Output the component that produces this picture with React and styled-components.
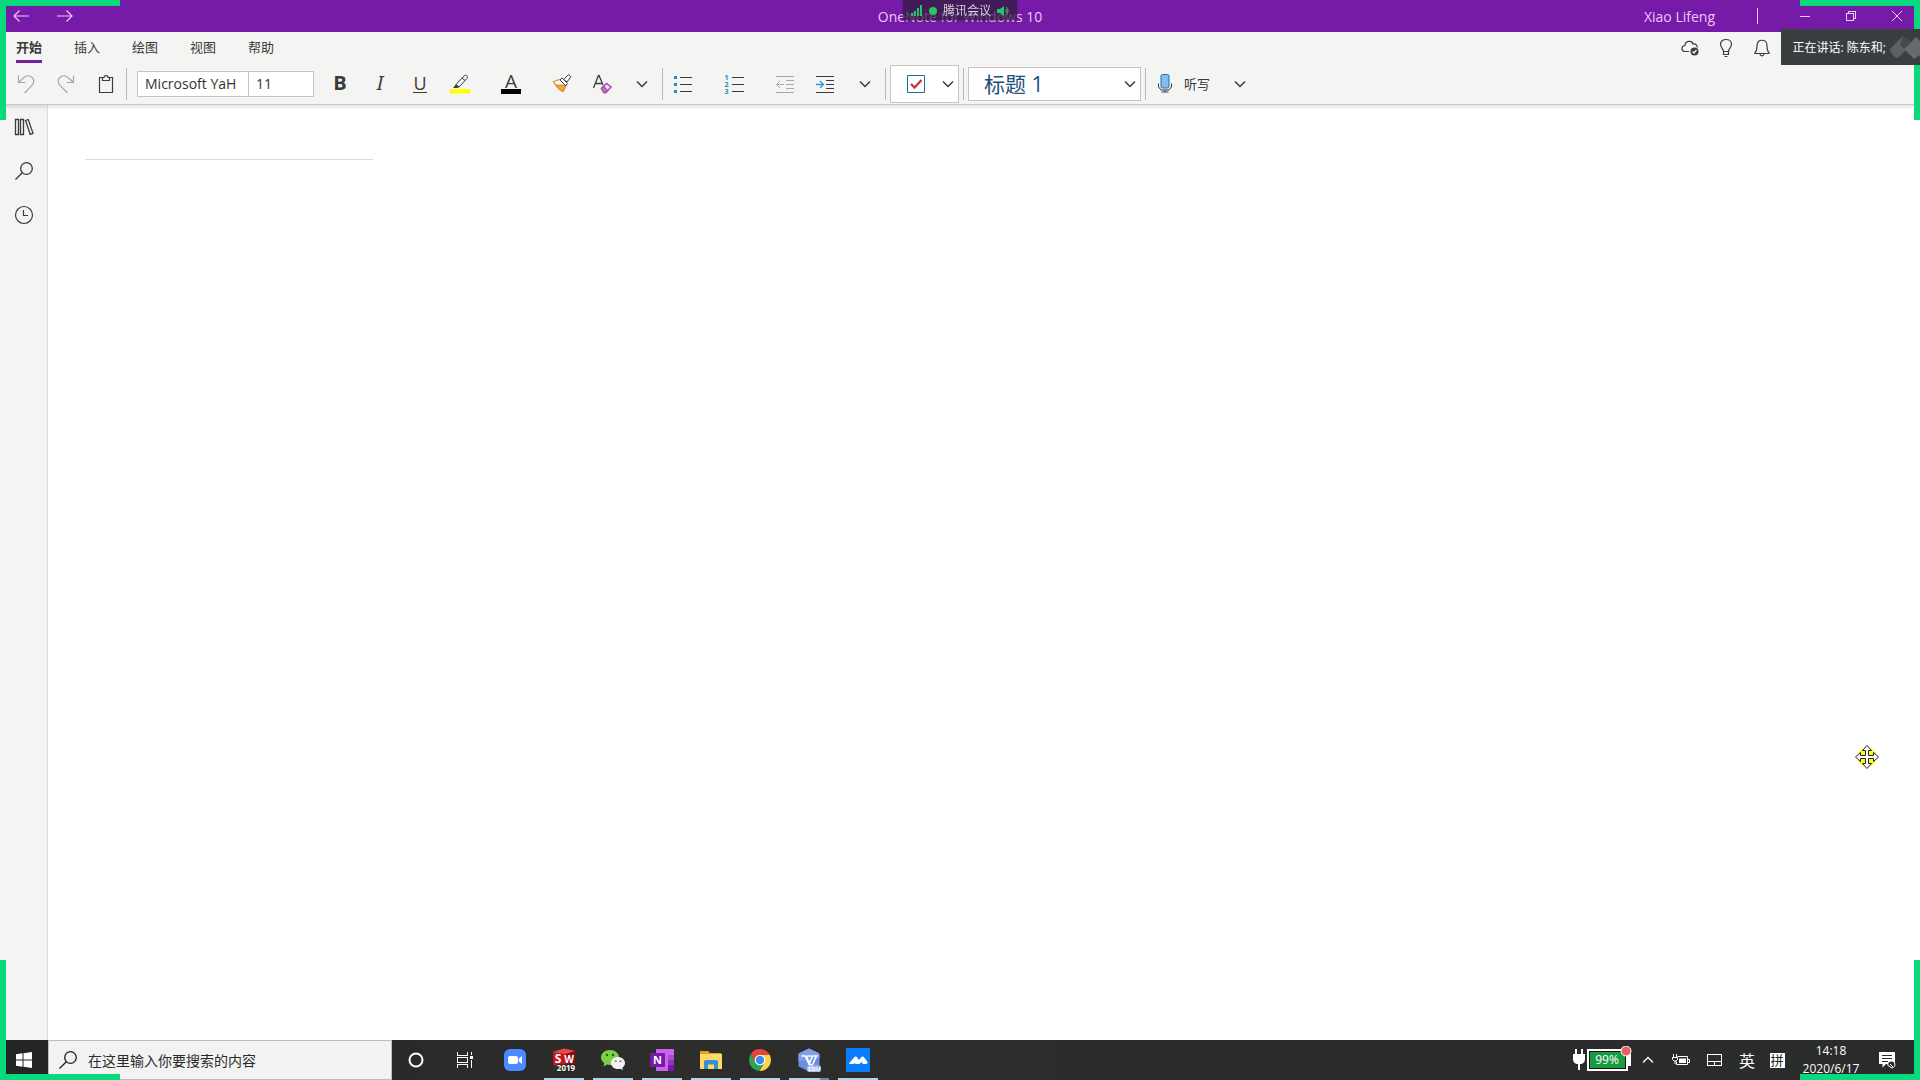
import React from "react";
import styled, { createGlobalStyle } from "styled-components";

const Svg = ({ size = 20, children, ...rest }) => (
  <svg
    width={size}
    height={size}
    viewBox={`0 0 ${size} ${size}`}
    fill="none"
    stroke="currentColor"
    aria-hidden="true"
    {...rest}
  >
    {children}
  </svg>
);

const Chevron = () => (
  <Svg size={12} strokeWidth="1.5">
    <path d="M1 3.5l5 5 5-5" />
  </Svg>
);

const BackIcon = () => (
  <Svg size={18} strokeWidth="1.2">
    <path d="M17 9H2M7.500 3.500L2 9l5.500 5.500" />
  </Svg>
);

const ForwardIcon = () => (
  <Svg size={18} strokeWidth="1.2">
    <path d="M1 9h15M10.500 3.500L16 9l-5.500 5.500" />
  </Svg>
);

const UndoIcon = () => (
  <Svg strokeWidth="1.2">
    <path d="M2.500 1.500v7h7M2.500 8.500l5-4.500c2.500-2.500 6-3 8.500-.7 2.500 2.300 2.200 5.700 0 8L8.500 19" />
  </Svg>
);

const RedoIcon = () => (
  <Svg strokeWidth="1.2">
    <path d="M17.500 1.500v7h-7M17.500 8.500l-5-4.500C10 1.500 6.500 1 4 3.300c-2.500 2.300-2.200 5.700 0 8l7.500 7.700" />
  </Svg>
);

const ClipboardIcon = () => (
  <Svg strokeWidth="1.2">
    <path d="M6 3.500H3.500v15h13v-15H14" />
    <path d="M6.500 6.500v-3H8c0-2.500 4-2.500 4 0h1.500v3z" />
  </Svg>
);

const HighlighterIcon = () => (
  <Svg>
    <path d="M0 15h20v4.500H0z" fill="#ff0" stroke="none" />
    <path d="M6 10.500L14 2c1-1 2-1 2.800-.2.900.9.900 2 0 2.800L9 13H6zM6 10.500L9 13M12 4l3 2.500" />
    <path d="M3 14l3-3.500L8.500 13 7 14z" fill="currentColor" stroke="none" />
  </Svg>
);

const BrushIcon = () => (
  <Svg>
    <path d="M1.500 7.500l8-2.500 5 6-3.500 6.500C7 16 4 12 1.500 7.500z" fill="#fff" stroke="#e08a2c" strokeWidth="1.3" />
    <path d="M4 11h10l-3 6.500C8 16 6 14 4 11z" fill="#f3a53f" stroke="#e08a2c" />
    <path d="M8 6l2-2 5.500 5.500-2 2z" fill="#fff" />
    <path d="M11.500 5.500l1.500-1 .8-1.500 3-2.300 2 2L16.500 6 15 8z" fill="#fff" />
  </Svg>
);

const EraserIcon = () => (
  <Svg strokeWidth="1.3">
    <path d="M1.500 14L6.500 1.500h.5L11 11M3.300 9.500h7" />
    <path d="M9.500 14.500l5-5 4.500 3.500-5 5.500h-2z" fill="#f6e5f8" stroke="#a44cad" strokeWidth="1.5" />
    <path d="M9.500 14.500l2-2 4 4-1.500 2h-2z" fill="#c27bca" stroke="#a44cad" />
  </Svg>
);

const BulletsIcon = () => (
  <Svg shapeRendering="crispEdges">
    <path d="M1 2h3v3H1zM1 9h3v3H1zM1 16h3v3H1z" fill="#2b88c3" stroke="none" />
    <path d="M7 3.500h12M7 10.500h12M7 17.500h12" />
  </Svg>
);

const OutdentIcon = () => (
  <Svg shapeRendering="crispEdges">
    <path d="M1 2.500h18M11 6.500h8M11 10.500h8M11 14.500h8M1 18.500h18" />
    <path d="M9 10.500H2M5 7l-3.500 3.500L5 14" shapeRendering="auto" />
  </Svg>
);

const IndentIcon = () => (
  <Svg shapeRendering="crispEdges">
    <path d="M1 2.500h18M11 6.500h8M11 10.500h8M11 14.500h8M1 18.500h18" />
    <path d="M1 10.500h7M5 7l3.500 3.500L5 14" stroke="#2b97d6" strokeWidth="1.300" shapeRendering="auto" />
  </Svg>
);

const TagIcon = () => (
  <Svg>
    <path d="M1.500 1.500h17v17h-17z" stroke="#1f6f93" />
    <path d="M5 10l3.500 3.500L15.500 6" stroke="#c0373a" strokeWidth="2.300" />
  </Svg>
);

const MicIcon = () => (
  <Svg>
    <rect x="6" y="1.500" width="8" height="13.500" rx="1.500" fill="#83beec" stroke="#1e6fae" />
    <path d="M3.500 10.500v3.500l2.500 3h8l2.500-3v-3.500M10 17v2M6.500 19h7" />
  </Svg>
);

const CloudIcon = () => (
  <Svg strokeWidth="1.200">
    <path d="M9 13.500H5C.8 13 1 8 5 7.500 5 2.500 12 2 13 6c3-.5 4.500 1.500 4 3.500" />
    <circle cx="14.500" cy="13.500" r="4" fill="currentColor" stroke="none" />
    <path d="M12.500 13.500l1.500 1.500 2.500-3" stroke="#fff" />
  </Svg>
);

const BulbIcon = () => (
  <Svg strokeWidth="1.200">
    <path d="M7.500 13.500c0-3-3-3.500-3-7.500C4.500 3.200 7 1.500 10 1.500s5.500 1.700 5.500 4.500c0 4-3 4.500-3 7.500zM7.500 13.500v3h5v-3M8.500 18.500h3" />
  </Svg>
);

const BellIcon = () => (
  <Svg strokeWidth="1.200">
    <path d="M3 14.500c2-1.500 2-3 2-7 0-7 10-7 10 0 0 4 0 5.500 2 7v1H3zM8 16c.3 2.500 3.700 2.500 4 0" />
  </Svg>
);

const BooksIcon = () => (
  <Svg strokeWidth="1.300">
    <path d="M1.500 2.500h3v15h-3zM6.500 2.500h3v15h-3zM11.500 3.500l2.700-1L19 16.300l-2.800 1z" />
  </Svg>
);

const SearchIcon = () => (
  <Svg strokeWidth="1.300">
    <circle cx="12.500" cy="7.500" r="5.800" />
    <path d="M8.300 11.700L1.500 18.500" />
  </Svg>
);

const ClockIcon = () => (
  <Svg strokeWidth="1.200">
    <circle cx="10" cy="10" r="8.500" />
    <path d="M9.500 5v5.500H14" />
  </Svg>
);

const MinimizeIcon = () => (
  <Svg size={12} shapeRendering="crispEdges">
    <path d="M1 6.500h10" />
  </Svg>
);

const RestoreIcon = () => (
  <Svg size={12} shapeRendering="crispEdges">
    <path d="M1.500 3.500h7v7h-7zM3.500 3V1.500h7v7H9" />
  </Svg>
);

const CloseIcon = () => (
  <Svg size={12}>
    <path d="M1 1l10 10M11 1L1 11" />
  </Svg>
);

const WindowsIcon = () => (
  <Svg size={16} fill="#fff" stroke="none">
    <path d="M0 2.200L6.500 1.300v6.200H0zM7.500 1.200L16 0v7.500H7.500zM0 8.500h6.500v6.200L0 13.800zM7.500 8.500H16V16l-8.500-1.200z" />
  </Svg>
);

const TaskViewIcon = () => (
  <Svg shapeRendering="crispEdges">
    <path d="M3.500 2v3.500h10V2M3.500 18v-3.500h10V18M3.500 7.500h10v5h-10zM17.500 2v3M17.500 10v8" />
    <path d="M16 6h3v3h-3z" fill="#fff" stroke="none" />
  </Svg>
);

const ZoomIcon = () => (
  <Svg size={24} stroke="none">
    <rect x="1" y="1" width="22" height="22" rx="6" fill="#4a8cff" />
    <rect x="5" y="8" width="10" height="8" rx="2" fill="#fff" />
    <path d="M15.700 10.800L19 8v8l-3.300-2.800z" fill="#fff" />
  </Svg>
);

const SolidWorksIcon = () => (
  <Svg size={24} stroke="none" fontFamily="Open Sans" fontWeight="700" textAnchor="middle">
    <path d="M1 4l11-3.500L23 3v15l-10 3L1 17z" fill="#c5161d" />
    <path d="M1 4l11-3.500L23 3l-9 3z" fill="#e8494c" />
    <path d="M13.500 6L23 3v15l-9.500 3z" fill="#8f0d13" />
    <text x="6" y="15" fontSize="12" fill="#fff">S</text>
    <text x="17" y="15" fontSize="10" fill="#fff">W</text>
    <text x="14" y="23" fontSize="8" fill="#fff" stroke="#222" strokeWidth="2" paintOrder="stroke">2019</text>
  </Svg>
);

const WeChatIcon = () => (
  <Svg size={26} stroke="none">
    <path d="M10 3c5 0 9 3.300 9 7.500S15 18 10 18c-1 0-2-.2-3-.5L3.500 19.500l.8-3.300C2.500 14.800 1 13 1 10.500 1 6.300 5 3 10 3z" fill="#7bd143" />
    <path d="M18 10c4 0 7 2.700 7 6 0 2-1 3.600-2.700 4.700l.5 2.300-2.600-1.300c-.7.200-1.400.3-2.200.3-4 0-7-2.700-7-6s3-6 7-6z" fill="#f2f2f2" />
    <circle cx="7" cy="8" r="1.200" fill="#2d5a18" />
    <circle cx="13" cy="8" r="1.200" fill="#2d5a18" />
    <circle cx="15.800" cy="14.200" r="1" fill="#777" />
    <circle cx="20.400" cy="14.200" r="1" fill="#777" />
  </Svg>
);

const OneNoteIcon = () => (
  <Svg size={24} stroke="none" fontFamily="Open Sans" fontWeight="700">
    <rect x="6" y="1" width="18" height="22" rx="1" fill="#ca64ea" />
    <path d="M18 7h6v5h-6z" fill="#ae4bd5" />
    <path d="M18 12h6v5h-6z" fill="#9332bf" />
    <path d="M18 17h6v6h-6z" fill="#7719aa" />
    <rect y="5" width="15" height="14" rx="1" fill="#7719aa" />
    <text x="3" y="16" fontSize="11" fill="#fff">N</text>
  </Svg>
);

const ExplorerIcon = () => (
  <Svg size={24} stroke="none">
    <path d="M1 3h8l2 2h11v3H1z" fill="#e0a31c" />
    <path d="M1 6h22v15H1z" fill="#ffd968" />
    <path d="M5 21v-8l2-1h10l2 1v8h-4v-4.500H9V21z" fill="#3b8fd0" />
  </Svg>
);

const ChromeIcon = () => (
  <Svg size={24} stroke="none">
    <path d="M2.500 6.500A11 11 0 0 1 21.800 7H12l-4.300 7.500z" fill="#e0473b" />
    <path d="M21.800 7A11 11 0 0 1 11.500 23l4.800-8.500L12 7z" fill="#fdd349" />
    <path d="M11.500 23A11 11 0 0 1 2.500 6.500l5.200 8h8.600z" fill="#2aa556" />
    <circle cx="12" cy="12" r="5.300" fill="#fff" />
    <circle cx="12" cy="12" r="4.200" fill="#4285f4" />
  </Svg>
);

const WpsIcon = () => (
  <Svg size={24} fontFamily="Open Sans" fontWeight="700">
    <path d="M11 1q1-.8 2 0l8.500 4q1 .5 1 1.500v11q0 1-1 1.500L13 23q-1 .8-2 0l-8.500-4q-1-.5-1-1.500v-11q0-1 1-1.500z" fill="#6c8de0" stroke="none" />
    <path d="M11 1q1-.8 2 0l8.500 4q1 .5 1 1.500V10l-21 3V6.500q0-1 1-1.500z" fill="#829fe8" stroke="none" />
    <path d="M4.500 8h3.800l3.700 8 3.700-8h3.800l-4.200 9h-2.100L9.500 8.500M10 8h4.500" stroke="#fff" strokeWidth="1.600" />
    <rect x="10" y="17.500" width="14" height="6.500" rx="2" fill="#a9baf0" stroke="none" />
    <text x="11" y="23" fontSize="6" fill="#fff" stroke="none">EDU</text>
  </Svg>
);

const MeetingIcon = () => (
  <Svg size={24} stroke="none">
    <rect width="24" height="24" fill="#0a7cff" />
    <path d="M3 15.500l5-6c1-1.200 2.300-1.200 3.200 0L13 12l2-2.500c1-1.200 2.200-1.200 3.200 0l3 4c.8 1.200 0 2.500-1.200 2.500H17l-1.500-2L13.500 16h-4l-1-1-1 1H3.500c-.5 0-.7-.2-.5-.5z" fill="#fff" />
  </Svg>
);

const PlugBatteryIcon = () => (
  <svg width="60" height="28" viewBox="0 0 60 28" aria-hidden="true">
    <path d="M3 3h2v5h4V3h2v5h2v5c0 3-2 5-5 5v6H6v-6c-3 0-5-2-5-5V8h2z" fill="#fff" />
    <rect x="16" y="4" width="39" height="20" fill="#1a9a43" stroke="#fff" strokeWidth="2" />
    <rect x="17.500" y="5.500" width="36" height="17" fill="none" stroke="#111" />
    <path d="M56 8h3v12h-3z" fill="#fff" />
    <text x="35" y="18" fontSize="12" fill="#fff" textAnchor="middle">99%</text>
    <circle cx="54" cy="5" r="5" fill="#ea6060" stroke="#fff" />
  </svg>
);

const ChargingIcon = () => (
  <Svg>
    <path d="M6.500 6.500h10v8H5.500v-3M17 9.500h1.500v3H17" />
    <path d="M8 8.500h7v4.500H8z" fill="currentColor" stroke="none" />
    <path d="M2.500 4v3M5.500 4v3M1.500 7.500h5v2L5 11H3L1.500 9.500zM4 11v3" />
  </Svg>
);

const TouchpadIcon = () => (
  <Svg size={18} shapeRendering="crispEdges">
    <path d="M1.500 3.500h14v11h-14zM1.500 10.500h14M8.500 10.500v4" />
  </Svg>
);

const NotifyIcon = () => (
  <Svg size={18}>
    <path d="M1 1h16v12h-9l-3.500 3.500V13H1z" fill="#fff" stroke="none" />
    <path d="M4 4.500h10M4 7.500h10M4 10.500h6" stroke="#2a2b2b" />
    <path d="M10 14.500a3.500 3.500 0 1 1 4 2.500zM12 13l3 3" stroke="#fff" fill="#2a2b2b" />
  </Svg>
);

const SignalIcon = () => (
  <Svg size={12} fill="#27c468" stroke="none">
    <path d="M0 8h2v3H0zM3 6h2v5H3zM6 3h2v8H6zM9 0h2v11H9z" />
  </Svg>
);

const SpeakerIcon = () => (
  <Svg size={12} stroke="#27c468">
    <path d="M0 4h3l4-3v10L3 8H0z" fill="#27c468" stroke="none" />
    <path d="M8.500 4c1 1 1 3 0 4M9.500 2c2 2 2 6 0 8" />
  </Svg>
);

const MoveCursor = () => (
  <Svg size={26} strokeWidth="1">
    <circle cx="13" cy="13" r="9.500" fill="#f9f92a" stroke="none" />
    <path
      d="M13 1.500L17.500 6.500H14.500v5H19.500V8.500L24.500 13 19.500 17.500V14.500H14.500v5H17.500L13 24.500 8.500 19.500H11.500v-5H6.500v3L1.500 13 6.500 8.500v3H11.500v-5H8.500z"
      fill="#fff"
      stroke="#222"
    />
  </Svg>
);

const tabs = ["开始", "插入", "绘图", "视图", "帮助"];

const apps = [
  { name: "Zoom", icon: <ZoomIcon /> },
  { name: "SolidWorks 2019", icon: <SolidWorksIcon />, running: true },
  { name: "微信", icon: <WeChatIcon />, running: true },
  { name: "OneNote", icon: <OneNoteIcon />, running: true },
  { name: "文件资源管理器", icon: <ExplorerIcon />, running: true },
  { name: "Chrome", icon: <ChromeIcon />, running: true },
  { name: "WPS", icon: <WpsIcon />, running: true, stacked: true },
  { name: "腾讯会议", icon: <MeetingIcon />, running: true },
];

const TitleBar = () => (
  <Title>
    <NavButtons>
      <PlainButton aria-label="后退"><BackIcon /></PlainButton>
      <PlainButton aria-label="前进"><ForwardIcon /></PlainButton>
    </NavButtons>
    <AppName>OneNote for Windows 10</AppName>
    <WindowControls>
      <UserName>Xiao Lifeng</UserName>
      <WindowButton aria-label="最小化"><MinimizeIcon /></WindowButton>
      <WindowButton aria-label="还原"><RestoreIcon /></WindowButton>
      <WindowButton aria-label="关闭"><CloseIcon /></WindowButton>
    </WindowControls>
  </Title>
);

const Ribbon = () => (
  <RibbonBox>
    <TabRow>
      <Tabs>
        {tabs.map((tab, i) => (
          <Tab key={tab} $active={i === 0}>{tab}</Tab>
        ))}
      </Tabs>
      <TabActions>
        <PlainButton aria-label="同步"><CloudIcon /></PlainButton>
        <PlainButton aria-label="提示"><BulbIcon /></PlainButton>
        <PlainButton aria-label="通知"><BellIcon /></PlainButton>
      </TabActions>
    </TabRow>
    <Toolbar>
      <ToolButton aria-label="撤消" disabled><UndoIcon /></ToolButton>
      <ToolButton aria-label="恢复" disabled><RedoIcon /></ToolButton>
      <ToolButton aria-label="粘贴"><ClipboardIcon /></ToolButton>
      <Separator />
      <FontFields>
        <FontInput aria-label="字体" defaultValue="Microsoft YaH" />
        <SizeInput aria-label="字号" defaultValue="11" />
      </FontFields>
      <ToolButton aria-label="加粗"><Bold>B</Bold></ToolButton>
      <ToolButton aria-label="倾斜"><Italic>I</Italic></ToolButton>
      <ToolButton aria-label="下划线"><Underline>U</Underline></ToolButton>
      <ToolButton aria-label="突出显示" $wide><HighlighterIcon /></ToolButton>
      <ToolButton aria-label="字体颜色" $wide><FontColor>A</FontColor></ToolButton>
      <ToolButton aria-label="格式刷"><BrushIcon /></ToolButton>
      <ToolButton aria-label="清除格式"><EraserIcon /></ToolButton>
      <ToolButton aria-label="更多字体选项"><Chevron /></ToolButton>
      <Separator />
      <ToolButton aria-label="项目符号" $wide><BulletsIcon /></ToolButton>
      <ToolButton aria-label="编号" $wide>
        <NumberList>
          <span>1</span>
          <span>2</span>
          <span>3</span>
        </NumberList>
      </ToolButton>
      <ToolButton aria-label="减少缩进" disabled><OutdentIcon /></ToolButton>
      <ToolButton aria-label="增加缩进"><IndentIcon /></ToolButton>
      <ToolButton aria-label="更多段落选项"><Chevron /></ToolButton>
      <Separator />
      <TagBox>
        <TagButton aria-label="待办事项"><TagIcon /></TagButton>
        <PlainButton aria-label="更多标记"><Chevron /></PlainButton>
      </TagBox>
      <Separator />
      <StyleBox>
        <StyleSelect aria-label="样式" defaultValue="h1">
          <option value="h1">标题 1</option>
        </StyleSelect>
        <Chevron />
      </StyleBox>
      <Separator />
      <DictateButton><MicIcon />听写</DictateButton>
      <ToolButton aria-label="听写语言"><Chevron /></ToolButton>
    </Toolbar>
  </RibbonBox>
);

const Taskbar = () => (
  <TaskbarBox>
    <TaskButton aria-label="开始菜单"><WindowsIcon /></TaskButton>
    <TaskSearch>
      <SearchIcon />
      <input type="text" aria-label="搜索" placeholder="在这里输入你要搜索的内容" />
    </TaskSearch>
    <TaskButton aria-label="Cortana">
      <Svg strokeWidth="2"><circle cx="10" cy="10" r="6.500" /></Svg>
    </TaskButton>
    <TaskButton aria-label="任务视图"><TaskViewIcon /></TaskButton>
    <AppList>
      {apps.map((app) => (
        <AppButton key={app.name} aria-label={app.name} $running={app.running} $stacked={app.stacked}>
          {app.icon}
        </AppButton>
      ))}
    </AppList>
    <Tray>
      <PlugBatteryIcon />
      <TrayButton $width={32} aria-label="显示隐藏的图标">
        <Svg size={12} strokeWidth="1.300"><path d="M1 8.500l5-5 5 5" /></Svg>
      </TrayButton>
      <TrayButton $width={34} aria-label="电源"><ChargingIcon /></TrayButton>
      <TrayButton $width={34} aria-label="触摸板"><TouchpadIcon /></TrayButton>
      <TrayButton $width={30}>英</TrayButton>
      <TrayButton $width={30}><Pinyin>拼</Pinyin></TrayButton>
      <TaskClock>
        <span>14:18</span>
        <span>2020/6/17</span>
      </TaskClock>
      <TrayButton $width={34} aria-label="操作中心"><NotifyIcon /></TrayButton>
    </Tray>
  </TaskbarBox>
);

const App = () => (
  <Page>
    <GlobalStyle />
    <TitleBar />
    <Ribbon />
    <Body>
      <SideRail>
        <RailButton aria-label="笔记本"><BooksIcon /></RailButton>
        <RailButton aria-label="搜索笔记"><SearchIcon /></RailButton>
        <RailButton aria-label="最近的笔记"><ClockIcon /></RailButton>
      </SideRail>
      <Canvas>
        <NoteTitle aria-label="笔记标题" />
        <Pointer><MoveCursor /></Pointer>
      </Canvas>
    </Body>
    <Taskbar />
    <Corner $top $left />
    <Corner $top />
    <Corner $left />
    <Corner />
    <MeetingPill>
      <SignalIcon />
      <Dot />
      腾讯会议
      <SpeakerIcon />
    </MeetingPill>
    <SpeakingPanel>
      正在讲话: 陈东和;
      <svg width="30" height="24" viewBox="0 0 30 24" aria-hidden="true">
        <path d="M0 14L13 1v9l4 4-9 9c-4-1-7-4-8-9z" fill="#5c6165" />
        <path d="M14 14L26 2l4 4v14l-6 4z" fill="#666b6f" />
        <path d="M13 1l8 6-7 7-4-4z" fill="#454a4e" />
      </svg>
    </SpeakingPanel>
  </Page>
);

const GlobalStyle = createGlobalStyle`
  * {
    box-sizing: border-box;
  }
  body {
    margin: 0;
    background: #fff;
    color: #3b3b3b;
    font-family: "Open Sans", "Noto Sans CJK SC", sans-serif;
    font-size: 13px;
  }
  button, input, select {
    font: inherit;
    color: inherit;
    border: none;
    border-radius: 0;
    background: none;
    padding: 0;
    margin: 0;
    outline: none;
  }
  svg {
    flex: none;
  }
`;

const Page = styled.div`
  display: flex;
  flex-direction: column;
  height: 100vh;
  overflow: hidden;
`;

const PlainButton = styled.button`
  display: flex;
  align-items: center;
  justify-content: center;
`;

const Title = styled.header`
  display: grid;
  grid-template-columns: 1fr auto 1fr;
  align-items: center;
  height: 32px;
  background: #761aa8;
  color: #ebc9fa;
  font-size: 14px;
`;
const NavButtons = styled.div`
  display: flex;
  gap: 26px;
  padding-left: 12px;
`;
const AppName = styled.span`
  line-height: 20px;
  padding-top: 2px;
`;
const WindowControls = styled.div`
  display: flex;
  justify-content: flex-end;
  align-items: center;
`;
const UserName = styled.span`
  height: 16px;
  line-height: 18px;
  padding-right: 42px;
  margin-right: 24px;
  border-right: 1px solid #ebc9fa;
`;
const WindowButton = styled(PlainButton)`
  width: 46px;
  height: 32px;
`;

const RibbonBox = styled.div`
  position: relative;
  z-index: 1;
  background: #f4f4f3;
  border-bottom: 1px solid #c8c8c8;
  box-shadow: 0 2px 4px rgba(0, 0, 0, 0.12);
`;
const TabRow = styled.div`
  display: flex;
  justify-content: space-between;
  height: 32px;
  padding-left: 16px;
`;
const Tabs = styled.nav`
  display: flex;
  gap: 32px;
`;
const Tab = styled.button`
  height: 31px;
  font-weight: ${(props) => (props.$active ? 700 : 400)};
  border-bottom: 3px solid ${(props) => (props.$active ? "#7022a0" : "transparent")};
`;
const TabActions = styled.div`
  display: flex;
  gap: 16px;
  padding-right: 148px;
`;
const Toolbar = styled.div`
  display: flex;
  align-items: center;
  height: 40px;
  padding-left: 6px;
`;
const ToolButton = styled(PlainButton)`
  width: ${(props) => (props.$wide ? 51 : 40)}px;
  height: 32px;
  padding-right: ${(props) => (props.$wide ? 11 : 0)}px;
  &:disabled {
    color: #a8a8a8;
  }
`;
const Separator = styled.span`
  width: 1px;
  height: 32px;
  background: #b9b9b9;
`;
const FontFields = styled.div`
  display: flex;
  width: 177px;
  height: 26px;
  margin: 0 6px 0 10px;
  border: 1px solid #c4c4c4;
  background: #fff;
  color: #333;
  font-size: 14px;
  input {
    padding: 0 0 2px 7px;
  }
`;
const FontInput = styled.input`
  width: 111px;
  border-right: 1px solid #c4c4c4;
`;
const SizeInput = styled.input`
  flex: 1;
  min-width: 0;
`;
const Bold = styled.span`
  padding-bottom: 2px;
  font-size: 20px;
  font-weight: 700;
  line-height: 20px;
`;
const Italic = styled.span`
  padding-bottom: 2px;
  font-family: "Noto Sans", sans-serif;
  font-size: 20px;
  font-style: italic;
  line-height: 20px;
`;
const Underline = styled.span`
  font-size: 18px;
  line-height: 17px;
  border-bottom: 1px solid #3b3b3b;
`;
const FontColor = styled.span`
  width: 20px;
  font-size: 19px;
  line-height: 15px;
  border-bottom: 5px solid #000;
`;
const NumberList = styled.span`
  display: grid;
  width: 19px;
  span {
    display: flex;
    align-items: center;
    gap: 3px;
    height: 7px;
    color: #2b88c3;
    font-size: 7px;
    font-weight: 700;
    line-height: 7px;
  }
  span::after {
    content: "";
    flex: 1;
    height: 1px;
    background: #3b3b3b;
  }
`;
const TagBox = styled.div`
  display: flex;
  height: 38px;
  width: 69px;
  margin: 0 4px;
  padding-right: 4px;
  border: 1px solid #c4c4c4;
  background: #fff;
`;
const TagButton = styled(PlainButton)`
  flex: 1;
  padding-right: 2px;
`;
const StyleBox = styled.div`
  display: flex;
  align-items: center;
  width: 173px;
  height: 34px;
  margin: 0 4px;
  padding: 0 4px 0 15px;
  border: 1px solid #c4c4c4;
  background: #fff;
`;
const StyleSelect = styled.select`
  flex: 1;
  appearance: none;
  color: #1e4e79;
  font-size: 21px;
  line-height: 32px;
`;
const DictateButton = styled(PlainButton)`
  gap: 9px;
  height: 32px;
  padding: 0 10px 2px 9px;
`;

const Body = styled.div`
  display: flex;
  flex: 1;
  min-height: 0;
`;
const SideRail = styled.aside`
  display: flex;
  flex-direction: column;
  width: 48px;
  background: #f4f4f3;
  border-right: 1px solid #dcdcdc;
`;
const RailButton = styled(PlainButton)`
  height: 44px;
`;
const Canvas = styled.main`
  position: relative;
  flex: 1;
  padding-left: 37px;
`;
const NoteTitle = styled.input`
  display: block;
  width: 288px;
  height: 55px;
  border-bottom: 1px solid #dcdcdc;
  font-size: 26px;
`;
const Pointer = styled.div`
  position: absolute;
  right: 40px;
  bottom: 270px;
  line-height: 0;
`;

const TaskbarBox = styled.footer`
  display: flex;
  height: 40px;
  background: linear-gradient(90deg, #232527, #2d2d2b 35%, #2a2b2b);
  color: #fff;
`;
const TaskButton = styled(PlainButton)`
  width: 48px;
`;
const TaskSearch = styled.label`
  display: flex;
  align-items: center;
  gap: 10px;
  width: 344px;
  padding-left: 9px;
  border: 1px solid #bdbdbd;
  background: #f2f2f2;
  color: #1f1f1f;
  font-size: 14px;
  input {
    flex: 1;
    min-width: 0;
  }
  input::placeholder {
    color: #2b2b2b;
    opacity: 1;
  }
`;
const AppList = styled.div`
  display: flex;
  margin-left: 2px;
`;
const AppButton = styled(PlainButton)`
  position: relative;
  width: 49px;
  &::after {
    content: "";
    display: ${(props) => (props.$running ? "block" : "none")};
    position: absolute;
    left: 5px;
    right: 4px;
    bottom: 0;
    height: 2px;
    background: ${(props) =>
      props.$stacked ? "linear-gradient(90deg, #a9d6f5 31px, #6a8ba3 31px)" : "#a9d6f5"};
  }
`;
const Tray = styled.div`
  display: flex;
  align-items: center;
  margin-left: auto;
  padding-right: 16px;
`;
const TrayButton = styled(PlainButton)`
  width: ${(props) => props.$width}px;
  height: 40px;
  font-size: 16px;
`;
const Pinyin = styled.span`
  width: 15px;
  height: 15px;
  background: #fff;
  color: #1f1f1f;
  font-size: 13px;
  line-height: 15px;
`;
const TaskClock = styled.div`
  display: flex;
  flex-direction: column;
  align-items: center;
  width: 78px;
  font-size: 12px;
  line-height: 18px;
`;

const Corner = styled.div`
  position: fixed;
  z-index: 2;
  ${(props) => (props.$top ? "top: 0;" : "bottom: 0;")}
  ${(props) => (props.$left ? "left: 0;" : "right: 0;")}
  width: 120px;
  height: 120px;
  border: 0 solid #07d97d;
  border-${(props) => (props.$top ? "top" : "bottom")}-width: 6px;
  border-${(props) => (props.$left ? "left" : "right")}-width: 6px;
  pointer-events: none;
`;
const MeetingPill = styled.div`
  position: fixed;
  z-index: 3;
  top: 0;
  left: 50%;
  transform: translateX(-50%);
  display: flex;
  align-items: center;
  gap: 6px;
  height: 20px;
  padding: 2px 8px 0;
  background: rgba(50, 30, 62, 0.75);
  box-shadow: 0 0 3px rgba(50, 30, 62, 0.75);
  color: #d8cfde;
  font-size: 12px;
  line-height: 18px;
  white-space: nowrap;
`;
const Dot = styled.span`
  width: 8px;
  height: 8px;
  border-radius: 50%;
  background: #27c468;
`;
const SpeakingPanel = styled.div`
  position: fixed;
  z-index: 3;
  top: 29px;
  right: 0;
  display: flex;
  align-items: center;
  gap: 4px;
  height: 36px;
  padding-left: 12px;
  background: #3a3e41;
  color: #fff;
  font-size: 12px;
  white-space: nowrap;
`;

export default App;
